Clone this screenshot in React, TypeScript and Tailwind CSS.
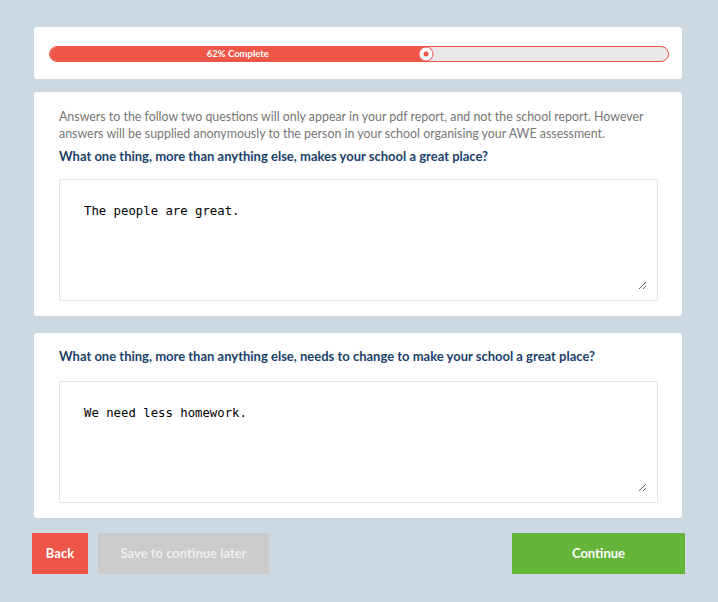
export default function App() {
  const pct = 62;
  return (
    <div className="min-h-[602px] w-full bg-[#cdd9e2] pt-[27px] pl-[34px] pr-[36px] pb-[28px] font-['Lato',sans-serif]">
      <div className="rounded-[3px] bg-white pl-[15px] pr-[13px] pt-[19px] pb-[17px]">
        <div className="relative h-[16px] w-full rounded-full border border-[#ef5548] bg-[#e9e7e7]">
          <div
            className="flex h-full items-center justify-center rounded-l-full bg-[#ef5548] text-[9.5px] font-bold text-white"
            style={{ width: `${pct - 1.2}%` }}
          >
            {pct}% Complete
          </div>
          <div
            className="absolute top-1/2 flex h-[15px] w-[15px] -translate-x-1/2 -translate-y-1/2 items-center justify-center rounded-full border border-[#ef5548] bg-white"
            style={{ left: `${pct - 1.2}%` }}
          >
            <div className="h-[5px] w-[5px] rounded-full bg-[#ef5548]" />
          </div>
        </div>
      </div>

      <div className="mt-[13px] rounded-[3px] bg-white pl-[25px] pr-[24px] pt-[16px] pb-[15px]">
        <p className="text-[12.4px] leading-[17px] text-[#767676]">
          Answers to the follow two questions will only appear in your pdf report, and not the school report. However answers will be supplied anonymously to the person in your school organising your AWE assessment.
        </p>
        <p className="mt-[6px] text-[13px] leading-[17px] font-bold text-[#1b3f6b]">
          What one thing, more than anything else, makes your school a great place?
        </p>
        <div className="mt-[14px] rounded-[2px] border border-[#e3e3e3] p-[10px]">
          <textarea
            className="block h-[100px] w-full resize-y px-[14px] pt-[12px] font-['DejaVu_Sans_Mono',monospace] text-[12.3px] text-black outline-none"
            defaultValue="The people are great."
          />
        </div>
      </div>

      <div className="mt-[17px] rounded-[3px] bg-white pl-[25px] pr-[24px] pt-[15px] pb-[15px]">
        <p className="text-[13px] leading-[17px] font-bold text-[#1b3f6b]">
          What one thing, more than anything else, needs to change to make your school a great place?
        </p>
        <div className="mt-[16px] rounded-[2px] border border-[#e3e3e3] p-[10px]">
          <textarea
            className="block h-[100px] w-full resize-y px-[14px] pt-[12px] font-['DejaVu_Sans_Mono',monospace] text-[12.3px] text-black outline-none"
            defaultValue="We need less homework."
          />
        </div>
      </div>

      <div className="mt-[15px] -ml-[2px] -mr-[3px] flex items-center">
        <button className="h-[41px] w-[56px] bg-[#ef5548] text-[13px] font-bold text-white">Back</button>
        <button className="ml-[10px] h-[41px] w-[171px] bg-[#cbcbcb] text-[13px] font-bold text-[#eeeeee]">
          Save to continue later
        </button>
        <button className="ml-auto h-[41px] w-[173px] bg-[#65b53a] text-[13px] font-bold text-white">Continue</button>
      </div>
    </div>
  );
}
